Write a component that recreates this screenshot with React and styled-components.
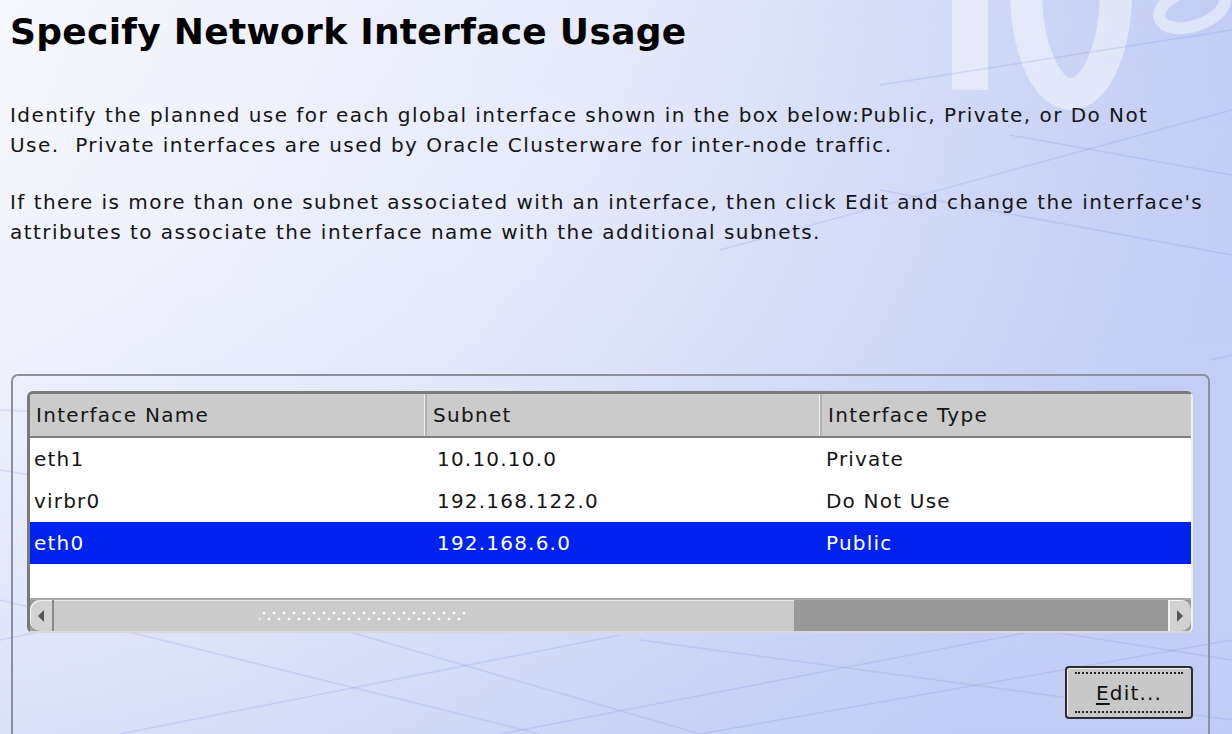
import React from "react";
import styled, {createGlobalStyle} from "styled-components";

const GlobalStyle = createGlobalStyle`
  html, body {
    margin: 0;
    padding: 0;
    width: 1232px;
    height: 734px;
    overflow: hidden;
  }
  body {
    font-family: "DejaVu Sans", "Liberation Sans", sans-serif;
    color: #111;
  }
`;

const rows = [
  {name: "eth1", subnet: "10.10.10.0", type: "Private"},
  {name: "virbr0", subnet: "192.168.122.0", type: "Do Not Use"},
  {name: "eth0", subnet: "192.168.6.0", type: "Public", selected: true},
];

// background: gradient, faint perspective grid and the "10g" mark
function Backdrop() {
  return (
    <BackdropSvg width="1232" height="734" viewBox="0 0 1232 734">
      <defs>
        <linearGradient id="bg" x1="0" y1="0" x2="1" y2="0.35">
          <stop offset="0" stopColor="#f7f8fd"/>
          <stop offset="0.45" stopColor="#e6eafa"/>
          <stop offset="1" stopColor="#b9c5f3"/>
        </linearGradient>
        <linearGradient id="fade" x1="0" y1="0" x2="0" y2="1">
          <stop offset="0" stopColor="#ffffff" stopOpacity="0"/>
          <stop offset="1" stopColor="#c9d2f6" stopOpacity="0.5"/>
        </linearGradient>
      </defs>
      <rect width="1232" height="734" fill="url(#bg)"/>
      <rect width="1232" height="734" fill="url(#fade)"/>
      <g fill="#ffffff" fillOpacity="0.45">
        <rect x="952" y="-10" width="36" height="100"/>
      </g>
      <g fill="none" stroke="#ffffff" strokeOpacity="0.45">
        <ellipse cx="1071" cy="-10" rx="45" ry="104" strokeWidth="32"/>
        <ellipse cx="1192" cy="8" rx="34" ry="18" strokeWidth="12" transform="rotate(-18 1192 8)"/>
      </g>
      <g stroke="#7f93e0" strokeOpacity="0.22" strokeWidth="1.5" fill="none">
        <line x1="880" y1="85" x2="1232" y2="30"/>
        <line x1="720" y1="250" x2="1232" y2="110"/>
        <line x1="1010" y1="135" x2="1232" y2="175"/>
        <line x1="880" y1="190" x2="1232" y2="255"/>
        <line x1="0" y1="410" x2="200" y2="420"/>
        <line x1="0" y1="470" x2="30" y2="475"/>
        <line x1="0" y1="640" x2="240" y2="590"/>
        <line x1="0" y1="600" x2="540" y2="734"/>
        <line x1="120" y1="734" x2="620" y2="635"/>
        <line x1="240" y1="600" x2="700" y2="734"/>
        <line x1="500" y1="734" x2="1040" y2="630"/>
        <line x1="640" y1="640" x2="1232" y2="720"/>
        <line x1="700" y1="734" x2="1232" y2="640"/>
        <line x1="1040" y1="630" x2="1232" y2="660"/>
        <line x1="1210" y1="360" x2="1232" y2="355"/>
      </g>
    </BackdropSvg>
  );
}

function ScrollArrow({dir}) {
  return (
    <svg width="10" height="14" viewBox="0 0 10 14">
      {dir === "left"
        ? <polygon points="8,1 2,7 8,13" fill="#555"/>
        : <polygon points="2,1 8,7 2,13" fill="#555"/>}
    </svg>
  );
}

export default function App() {
  return (
    <Page>
      <GlobalStyle/>
      <Backdrop/>
      <Content>
        <Title>Specify Network Interface Usage</Title>
        <Paragraph>
          Identify the planned use for each global interface shown in the box below:Public, Private, or Do Not<br/>
          Use.&nbsp;&nbsp;Private interfaces are used by Oracle Clusterware for inter-node traffic.
        </Paragraph>
        <Paragraph>
          If there is more than one subnet associated with an interface, then click Edit and change the interface's<br/>
          attributes to associate the interface name with the additional subnets.
        </Paragraph>
        <Panel>
          <TableFrame>
            <HeaderRow>
              <HeaderCell>Interface Name</HeaderCell>
              <HeaderCell>Subnet</HeaderCell>
              <HeaderCell last>Interface Type</HeaderCell>
            </HeaderRow>
            <Body>
              {rows.map(r => (
                <Row key={r.name} selected={r.selected}>
                  <Cell>{r.name}</Cell>
                  <Cell indent>{r.subnet}</Cell>
                  <Cell>{r.type}</Cell>
                </Row>
              ))}
            </Body>
            <ScrollBar>
              <ArrowButton side="left"><ScrollArrow dir="left"/></ArrowButton>
              <Thumb><Grip/></Thumb>
              <Trough/>
              <ArrowButton side="right"><ScrollArrow dir="right"/></ArrowButton>
            </ScrollBar>
          </TableFrame>
          <ButtonRow>
            <EditButton><u>E</u>dit...</EditButton>
          </ButtonRow>
        </Panel>
      </Content>
    </Page>
  );
}

const Page = styled.div`
  position: relative;
  width: 1232px;
  height: 734px;
  overflow: hidden;
`;

const BackdropSvg = styled.svg`
  position: absolute;
  left: 0;
  top: 0;
  z-index: 0;
`;

const Content = styled.div`
  position: relative;
  z-index: 1;
  padding: 10px 0 0 10px;
`;

const Title = styled.h1`
  margin: 0;
  font-family: "DejaVu Sans", sans-serif;
  font-size: 36px;
  line-height: 44px;
  font-weight: bold;
  letter-spacing: 0.3px;
  color: #000;
`;

const Paragraph = styled.p`
  margin: 46px 0 0 0;
  font-size: 20px;
  line-height: 30px;
  letter-spacing: 1.45px;
  color: #141414;
  white-space: nowrap;
  & + & {
    margin-top: 27px;
  }
`;

const Panel = styled.div`
  margin-top: 127px;
  margin-left: 1px;
  width: 1199px;
  height: 400px;
  box-sizing: border-box;
  border: 2px solid #8d8f9c;
  border-bottom: none;
  border-radius: 7px 7px 0 0;
  padding: 15px 15px 0 14px;
`;

const TableFrame = styled.div`
  width: 1166px;
  box-sizing: border-box;
  border-top: 3px solid #7a7a7a;
  border-left: 3px solid #7a7a7a;
  border-right: 2px solid #f0f0f0;
  border-bottom: 2px solid #d8d8d8;
  border-radius: 6px;
  background: #fff;
  overflow: hidden;
`;

const HeaderRow = styled.div`
  display: grid;
  grid-template-columns: 397px 395px 1fr;
  height: 42px;
  background: #cbcbcb;
  border-bottom: 2px solid #7e7e7e;
`;

const HeaderCell = styled.div`
  display: flex;
  align-items: center;
  padding-left: 6px;
  font-size: 20px;
  letter-spacing: 1.3px;
  color: #151515;
  border-right: ${({last}) => last ? "none" : "2px solid #b0b0b0"};
  box-shadow: ${({last}) => last ? "none" : "inset -1px 0 0 #efefef"};
`;

const Body = styled.div`
  height: 160px;
  background: #fff;
`;

const Row = styled.div`
  display: grid;
  grid-template-columns: 397px 395px 1fr;
  height: 42px;
  background: ${({selected}) => selected ? "#0022ee" : "transparent"};
  color: ${({selected}) => selected ? "#fff" : "#151515"};
`;

const Cell = styled.div`
  display: flex;
  align-items: center;
  padding-left: ${({indent}) => indent ? 10 : 4}px;
  font-size: 20px;
  letter-spacing: 1.2px;
`;

const ScrollBar = styled.div`
  display: flex;
  height: 31px;
  border-top: 2px solid #aaa;
  background: #9a9a9a;
`;

const ArrowButton = styled.div`
  width: 22px;
  flex: none;
  display: flex;
  align-items: center;
  justify-content: center;
  background: #d2d2d2;
  border-left: ${({side}) => side === "right" ? "1px solid #eee" : "none"};
  border-right: ${({side}) => side === "left" ? "2px solid #888" : "none"};
  border-radius: ${({side}) => side === "left" ? "10px 0 0 10px" : "0 10px 10px 0"};
  box-shadow: inset 1px 1px 0 #f2f2f2;
`;

const Thumb = styled.div`
  width: 740px;
  flex: none;
  display: flex;
  align-items: center;
  padding-left: 205px;
  box-sizing: border-box;
  background: #cbcbcb;
  box-shadow: inset 0 1px 0 #e8e8e8;
`;

const Grip = styled.div`
  width: 208px;
  height: 12px;
  background-image:
    radial-gradient(circle, #ffffff 1.2px, transparent 1.7px),
    radial-gradient(circle, #ffffff 1.2px, transparent 1.7px);
  background-size: 10px 12px;
  background-position: 0 -3px, 5px 3px;
`;

const Trough = styled.div`
  flex: 1;
  background: #999;
`;

const ButtonRow = styled.div`
  display: flex;
  justify-content: flex-end;
  padding: 33px 0 0 0;
  width: 1166px;
`;

const EditButton = styled.button`
  width: 128px;
  height: 53px;
  box-sizing: border-box;
  font-family: "DejaVu Sans", sans-serif;
  font-size: 20px;
  letter-spacing: 1.2px;
  color: #111;
  background: #c8c8c8;
  border: 2px solid #2c2c2c;
  border-radius: 4px;
  box-shadow: inset 1px 1px 0 #f0f0f0;
  position: relative;
  padding: 0;
  &::before, &::after {
    content: "";
    position: absolute;
    left: 8px;
    right: 8px;
    border-top: 2px dotted #222;
  }
  &::before { top: 4px; }
  &::after { bottom: 4px; }
  u {
    text-underline-offset: 3px;
  }
`;
